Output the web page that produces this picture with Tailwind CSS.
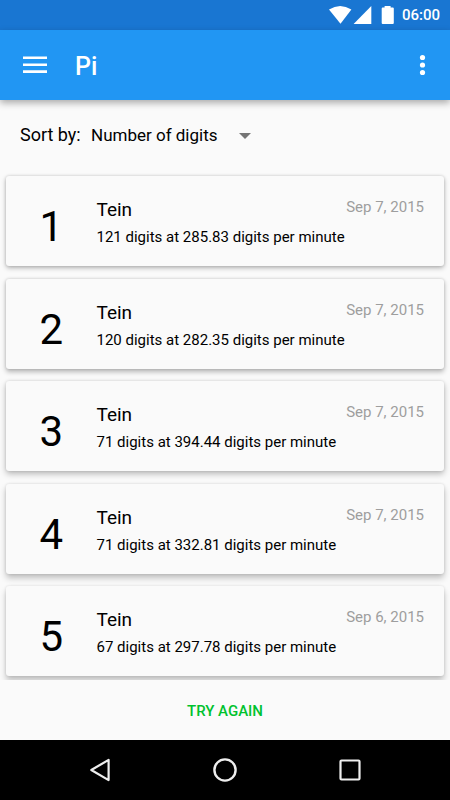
<!DOCTYPE html>
<html lang="en">
<head>
    <meta charset="UTF-8">
    <meta name="viewport" content="width=device-width, initial-scale=1.0">
    <title>Pi</title>
    <script src="https://cdn.jsdelivr.net/npm/@tailwindcss/browser@4"></script>
</head>
<body class="bg-[#fafafa] h-screen flex flex-col overflow-hidden font-['Roboto',sans-serif] text-black">
    <!-- Status bar -->
    <div class="h-[30px] shrink-0 bg-[#1976d2] text-white flex items-center justify-end pr-[10px]">
        <svg class="w-[72px] h-[30px] mr-[2px]" viewBox="328 0 72 30" fill="#fff">
            <path d="M329 9.600Q340.200 2.400 351.400 9.600L340.500 23.800Z"/>
            <path d="M371.300 6V24H353.600Z"/>
            <path d="M384.600 6h6v1.400h2.200q1 0 1 1V23q0 1-1 1H382.700q-1 0-1-1V8.400q0-1 1-1h1.900z"/>
        </svg>
        <span class="text-[15px] font-medium leading-[30px]">06:00</span>
    </div>

    <!-- App bar -->
    <header class="h-[70px] shrink-0 bg-[#2196f3] text-white flex items-center pl-[23px] pr-[20px] relative z-10 shadow-[0_3px_7px_rgba(0,0,0,0.32)]">
        <svg class="w-6 h-[18px]" viewBox="0 0 24 18" fill="#fff">
            <path d="M0 .5h24v2.600H0zM0 7.500h24v2.600H0zM0 14.300h24v2.600H0z"/>
        </svg>
        <h1 class="ml-[28px] text-[25px] font-medium leading-none pt-[2px]">Pi</h1>
        <svg class="ml-auto w-[15px] h-[22px]" viewBox="0 0 15 22" fill="#fff">
            <circle cx="7.500" cy="3.500" r="2.600"/>
            <circle cx="7.500" cy="11" r="2.600"/>
            <circle cx="7.500" cy="18.500" r="2.600"/>
        </svg>
    </header>

    <!-- Sort selector -->
    <div class="h-[76px] shrink-0 flex items-baseline pl-5 pt-[23px] leading-[24px]">
        <span class="w-[71px] text-[18px]">Sort by:</span>
        <span class="w-[148px] text-[17px]">Number of digits</span>
        <svg class="w-[12px] h-[6px] self-start mt-[9.500px]" viewBox="0 0 12 6" fill="#757575"><path d="M0 0h12L6 6z"/></svg>
    </div>

    <main id="scores" class="flex-1 min-h-0 overflow-hidden px-[6px] flex flex-col gap-[12.5px] -mt-1 pt-1"></main>

    <div class="h-[60px] shrink-0 bg-[#fafafa] flex items-center justify-center pt-[2px]">
        <button class="text-[15px] font-medium text-[#00c22e]">TRY AGAIN</button>
    </div>

    <!-- Navigation bar -->
    <nav class="h-[60px] shrink-0 bg-black flex items-center justify-center gap-[95px]">
        <svg class="w-[30px] h-[30px]" viewBox="0 0 30 30" fill="none" stroke="#eee" stroke-width="2.200" stroke-linejoin="round"><path d="M6.300 15 23.600 4.900V25.100Z"/></svg>
        <svg class="w-[30px] h-[30px]" viewBox="0 0 30 30" fill="none" stroke="#eee" stroke-width="2.400"><circle cx="15" cy="15" r="10.600"/></svg>
        <svg class="w-[30px] h-[30px]" viewBox="0 0 30 30" fill="none" stroke="#eee" stroke-width="2.200"><rect x="5.500" y="5.500" width="19" height="19" rx="1"/></svg>
    </nav>

    <script>
        const scores = [
            { name: 'Tein', digits: 121, speed: '285.83', date: 'Sep 7, 2015' },
            { name: 'Tein', digits: 120, speed: '282.35', date: 'Sep 7, 2015' },
            { name: 'Tein', digits: 71, speed: '394.44', date: 'Sep 7, 2015' },
            { name: 'Tein', digits: 71, speed: '332.81', date: 'Sep 7, 2015' },
            { name: 'Tein', digits: 67, speed: '297.78', date: 'Sep 6, 2015' },
        ];

        // shadows get deeper towards the bottom of the screen
        const shadows = [
            'shadow-[0_2px_5px_rgba(0,0,0,0.28),0_0_3px_rgba(0,0,0,0.14)]',
            'shadow-[0_2.5px_5px_rgba(0,0,0,0.27),0_0_3px_rgba(0,0,0,0.14)]',
            'shadow-[0_3px_6px_rgba(0,0,0,0.26),0_0_3px_rgba(0,0,0,0.13)]',
            'shadow-[0_4px_6px_rgba(0,0,0,0.24),0_0_3px_rgba(0,0,0,0.12)]',
            'shadow-[0_5px_6px_rgba(0,0,0,0.22),0_0_3px_rgba(0,0,0,0.12)]',
        ];

        document.getElementById('scores').innerHTML = scores.map((score, i) => `
            <div class="h-[90px] shrink-0 flex rounded-[3px] bg-[#fafafa] ${shadows[i]}">
                <div class="w-[90.5px] text-center text-[42px] leading-[90px] pt-[6px]">${i + 1}</div>
                <div class="flex-1 pt-[22px] pr-5">
                    <div class="flex justify-between">
                        <span class="text-[19px] leading-[24px]">${score.name}</span>
                        <span class="text-[15px] leading-[19px] text-[#9e9e9e]">${score.date}</span>
                    </div>
                    <p class="text-[15px] leading-[18px] mt-[6px]">${score.digits} digits at ${score.speed} digits per minute</p>
                </div>
            </div>
        `).join('');
    </script>
</body>
</html>
